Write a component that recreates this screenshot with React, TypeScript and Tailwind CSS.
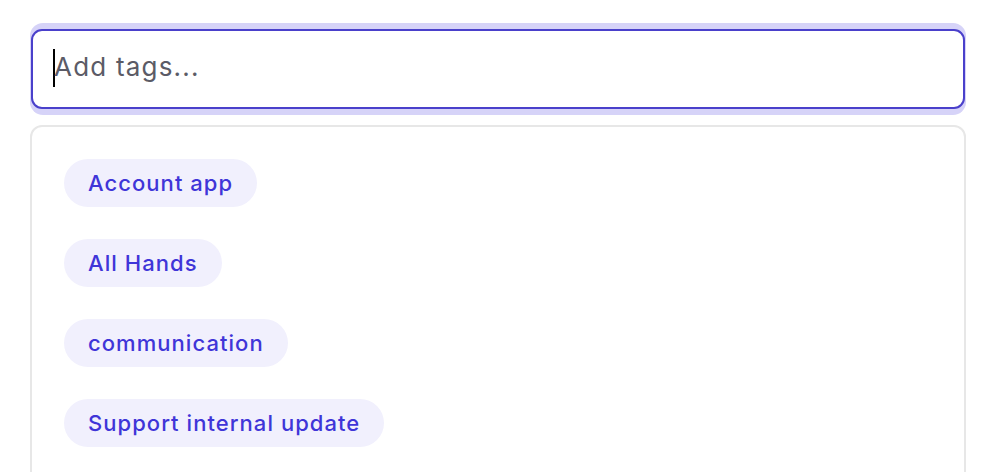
import React from "react";

const tags = ["Account app", "All Hands", "communication", "Support internal update"];

export default function App() {
  return (
    <div
      className="min-h-[472px] bg-white pt-[23px] pl-[30px] pr-[26px]"
      style={{ fontFamily: "Inter, 'Noto Sans', sans-serif" }}
    >
      <div className="rounded-[13px] bg-[#d6d3f8] px-[1px] py-[6px]">
        <div className="flex h-[80px] items-center rounded-[11px] border-2 border-[#4a40cb] bg-white pl-[20px]">
          <span className="mt-[-2px] h-[38px] w-[2px] bg-black" />
          <span className="-ml-[1px] mt-[-4px] text-[26px] leading-none tracking-[1.2px] text-[#5b5b66]">
            Add tags...
          </span>
        </div>
      </div>
      <div className="mt-[10px] flex flex-col items-start gap-[32px] rounded-[12px] border-2 border-[#e7e7e7] px-[32px] pt-[32px] pb-[40px]">
        {tags.map((t) => (
          <span
            key={t}
            className="flex h-[48px] items-center rounded-full bg-[#f1f0fd] px-[24px] text-[22px] font-medium tracking-[1.05px] text-[#3f35d8]"
          >
            {t}
          </span>
        ))}
      </div>
    </div>
  );
}
